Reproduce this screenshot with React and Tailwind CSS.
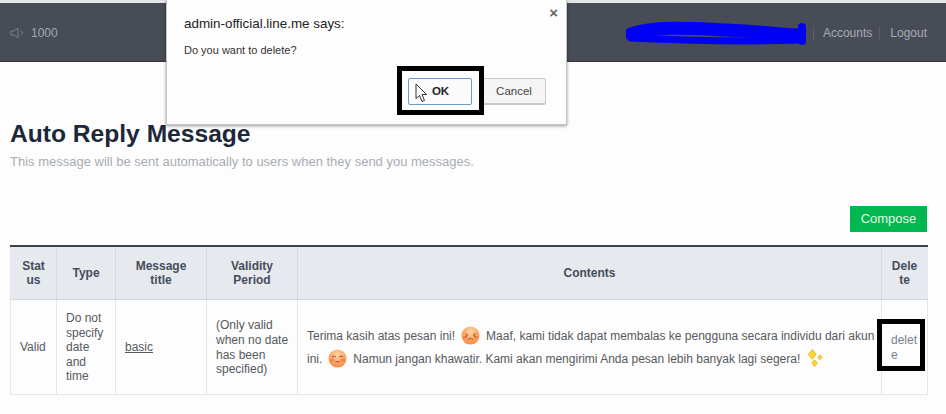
function BlushFace({ sleepy }) {
  return (
    <svg viewBox="0 0 20 20" className="inline-block w-[19px] h-[19px] align-middle mx-[6px] -mt-[2px]">
      <defs>
        <radialGradient id={sleepy ? "faceA" : "faceB"} cx="50%" cy="30%" r="70%">
          <stop offset="0%" stopColor="#ffd6a6" />
          <stop offset="100%" stopColor="#f78a3e" />
        </radialGradient>
      </defs>
      <circle cx="10" cy="10" r="9.5" fill={`url(#${sleepy ? "faceA" : "faceB"})`} />
      <ellipse cx="4.5" cy="11.5" rx="2.4" ry="1.6" fill="#ee5b3a" opacity="0.55" />
      <ellipse cx="15.5" cy="11.5" rx="2.4" ry="1.6" fill="#ee5b3a" opacity="0.55" />
      {sleepy ? (
        <path d="M4.5 8q2-1.2 3.5 0M12 8q1.500-1.200 3.500 0M8 13.500h4" stroke="#a8401c" strokeWidth="1" fill="none" strokeLinecap="round" />
      ) : (
        <path d="M5 8l2 1.500-2 1.500M15 8l-2 1.500 2 1.500M7.500 14q2.500-2.400 5 0" stroke="#a8401c" strokeWidth="1" fill="none" strokeLinecap="round" />
      )}
    </svg>
  );
}

function Sparkle() {
  return (
    <svg viewBox="0 0 20 21" className="inline-block w-[18px] h-[20px] align-middle mx-[6px] -mt-[2px]">
      <path d="M7 1l4.500 5.500L7 12 2.500 6.500z" fill="#fdd231" stroke="#d9a520" strokeWidth="0.7" />
      <path d="M9.500 12.500l3.200 3.500-3.200 4-3.200-4z" fill="#fdd231" stroke="#d9a520" strokeWidth="0.7" />
      <path d="M15.500 7l2.300 2.800-2.300 2.700-2.300-2.700z" fill="#fdd231" stroke="#d9a520" strokeWidth="0.7" />
    </svg>
  );
}

function Dialog() {
  return (
    <div className="absolute left-[166px] top-0 w-[401px] h-[125px] bg-[#fdfdfd] border border-[#c4c4c4] border-t-0 shadow-[0_1px_3px_rgba(0,0,0,0.4)] text-[#303030]">
      <div className="absolute right-[8px] top-[5px] text-[15px] leading-[16px] font-bold text-[#666]">×</div>
      <div className="pl-[17px] pt-[15px] text-[13.400px] leading-[17px] text-[#222]">admin-official.line.me says:</div>
      <div className="pl-[17px] pt-[11px] text-[11px] leading-[14px] text-[#333]">Do you want to delete?</div>
      <div className="flex justify-end gap-[10px] pr-[20px] pt-[21px]">
        <div className="relative flex items-center justify-center w-[64px] h-[27px] border border-[#6f9ad0] rounded-[2px] bg-[#fbfbfb] text-[11.500px] font-bold text-[#222]">
          <span className="pl-[1px]">OK</span>
          <svg viewBox="0 0 12 20" className="absolute left-[6px] top-[4px] w-[12px] h-[20px]">
            <path d="M1 1v14.500l3.500-3 2.500 6 2.500-1-2.500-6h4.500z" fill="#fff" stroke="#333" strokeWidth="1" strokeLinejoin="round" />
          </svg>
        </div>
        <div className="flex items-center justify-center w-[64px] h-[27px] border border-[#c9c9c9] border-b-2 rounded-[2px] bg-[#f5f5f5] text-[11.500px] text-[#444]">Cancel</div>
      </div>
    </div>
  );
}

export default function App() {
  const th = "border-l border-[#d5d9de] first:border-l-0 px-[6px] pt-[1px] font-bold text-center text-[#474c5c]";
  const td = "border-l border-[#e4e6e8] first:border-l-0 pl-[9px] pt-[2px] text-left align-middle";

  return (
    <div className="relative w-[946px] h-[414px] overflow-hidden bg-[#fdfdfd] font-['Liberation_Sans',Arial,sans-serif] text-[12px] leading-[14.600px] text-[#555a60]">
      <div className="h-[3px] bg-[#e4e5e5]" />
      <header className="flex items-center justify-between h-[59px] bg-[#474c57] border-b border-[#33363e] pl-[10px] pr-[19px] pt-[2px]">
        <div className="flex items-center gap-[7px] text-[#a4a8ae] text-[12px]">
          <svg viewBox="0 0 14 12" className="w-[14px] h-[12px]" fill="none" stroke="#7c8089" strokeWidth="1">
            <path d="M1 4h3l4-3v10L4 8H1zM10.500 3.500L13 6l-2.500 2.500" />
          </svg>
          1000
        </div>
        <div className="flex items-center text-[12px] text-[#a9adb3]">
          <svg viewBox="0 0 182 26" className="w-[182px] h-[26px] mr-[5px]">
            <path d="M5 14C30 6 60 8 100 10S150 14 172 15" stroke="#0000f5" strokeWidth="13" fill="none" strokeLinecap="round" />
            <path d="M5 18C50 20 120 22 172 20" stroke="#0000f5" strokeWidth="7" fill="none" strokeLinecap="round" />
            <rect x="172" y="3" width="8" height="22" rx="4" fill="#0000f5" />
          </svg>
          <span className="border-l border-[#5b5f69] pl-[9px] pr-[7px] leading-[14px]">Accounts</span>
          <span className="border-l border-[#5b5f69] pl-[10px] leading-[14px]">Logout</span>
        </div>
      </header>

      <main className="px-[10px] pr-[19px]">
        <h1 className="mt-[57px] text-[24.600px] leading-[30px] font-bold text-[#1c2839]">Auto Reply Message</h1>
        <p className="mt-[5px] text-[13px] leading-[16px] text-[#a8acb4]">This message will be sent automatically to users when they send you messages.</p>

        <div className="flex justify-end mt-[36px]">
          <button className="w-[77px] h-[26px] pt-[1px] bg-[#00b84f] text-[13px] text-[#e6f8ec]">Compose</button>
        </div>

        <table className="mt-[13px] w-[917px] table-fixed border-collapse border-b border-r border-l border-[#e4e6e8]">
          <colgroup>
            <col className="w-[46px]" />
            <col className="w-[59px]" />
            <col className="w-[91px]" />
            <col className="w-[91px]" />
            <col className="w-[584px]" />
            <col className="w-[46px]" />
          </colgroup>
          <thead>
            <tr className="h-[53px] bg-[#e6e9ed] border-t-2 border-t-[#3c4250] border-b border-b-[#d3d6da]">
              <th className={th}>Stat<br />us</th>
              <th className={th}>Type</th>
              <th className={th}>Message<br />title</th>
              <th className={th}>Validity<br />Period</th>
              <th className={th}>Contents</th>
              <th className={th}>Dele<br />te</th>
            </tr>
          </thead>
          <tbody>
            <tr className="h-[95px]">
              <td className={td}>Valid</td>
              <td className={`${td} pr-[9px]`}>Do not specify date and time</td>
              <td className={td}><a className="underline">basic</a></td>
              <td className={`${td} pr-[4px]`}>(Only valid when no date has been specified)</td>
              <td className={`${td} pr-[5px] leading-[23px]`}>
                Terima kasih atas pesan ini!<BlushFace />Maaf, kami tidak dapat membalas ke pengguna secara individu dari akun ini.<BlushFace sleepy />Namun jangan khawatir. Kami akan mengirimi Anda pesan lebih banyak lagi segera!<Sparkle />
              </td>
              <td className={`${td} pr-[9px] text-[#7a8090]`} style={{ overflowWrap: "anywhere" }}>delete</td>
            </tr>
          </tbody>
        </table>
      </main>

      <Dialog />

      {/* annotation boxes from the screenshot */}
      <div className="absolute left-[397px] top-[66px] w-[87px] h-[49px] border-[5px] border-black" />
      <div className="absolute left-[877px] top-[319px] w-[48px] h-[52px] border-[5px] border-black" />
    </div>
  );
}
